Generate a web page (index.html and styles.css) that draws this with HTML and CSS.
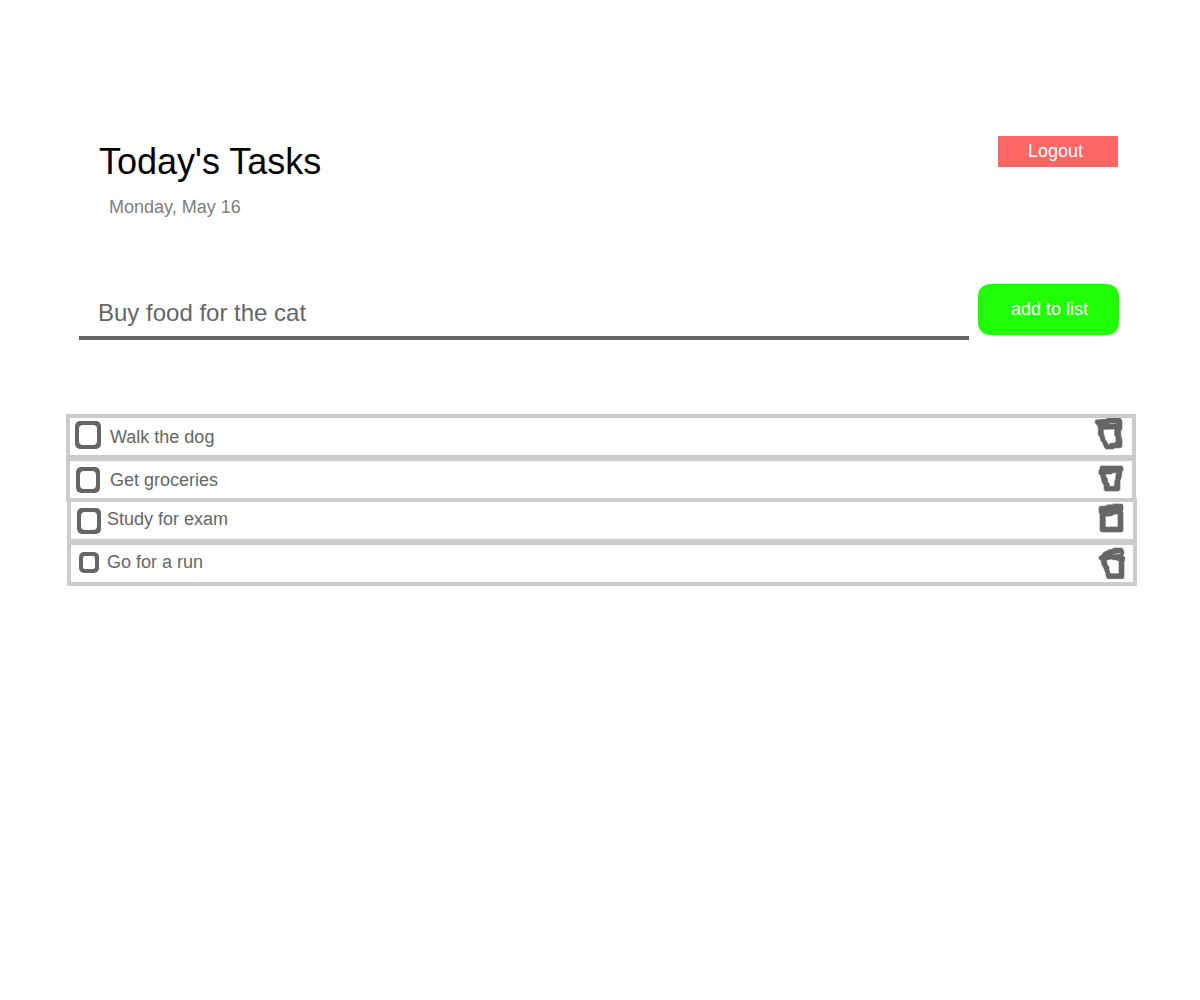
FILE: index.html
```html
<!DOCTYPE html>
<html lang="en">
<head>
<meta charset="utf-8">
<meta name="viewport" content="width=device-width, initial-scale=1">
<title>Today's Tasks</title>
<link rel="stylesheet" href="styles.css">
</head>
<body>
<main class="page">
  <header class="header">
    <div>
      <h1 class="title">Today's Tasks</h1>
      <p class="date">Monday, May 16</p>
    </div>
    <button class="logout" type="button">Logout</button>
  </header>

  <form class="add-form">
    <input class="new-task" type="text" aria-label="New task" value="Buy food for the cat">
    <button class="add" type="button">add to list</button>
  </form>

  <ul class="tasks">
    <li class="task">
      <span class="slot"><input class="check large" type="checkbox" id="task-1"></span>
      <label class="name" for="task-1">Walk the dog</label>
      <button class="delete" type="button" aria-label="Delete Walk the dog">
        <svg viewBox="36 39 108 111"><path fill-rule="evenodd" d="M47 45L80 42L82 39H120L124 43L126 50V72L122 78L123 95L126 104V125L122 128L102 129L100 132H78L73 127L68 113L62 106L60 96L55 89V68L52 61L49 58L45 51ZM87 54V57H108V54ZM70 73V86L74 95L75 103L81 112L84 118L89 119L91 115L105 114L108 108V98L104 90V72Z"/></svg>
      </button>
    </li>
    <li class="task">
      <span class="slot"><input class="check medium" type="checkbox" id="task-2"></span>
      <label class="name" for="task-2">Get groceries</label>
      <button class="delete" type="button" aria-label="Delete Get groceries">
        <svg viewBox="36 168 108 111"><path fill-rule="evenodd" d="M63 183H126L129 187V196L126 200L123 220L120 226V253L116 258H76L72 253V241L66 230L62 211L57 208V196L60 192V187ZM76 207L78 215L82 220L83 230L88 237V244H104V230L107 221L109 202L98 204L94 207Z"/></svg>
      </button>
    </li>
  </ul>

  <ul class="tasks later">
    <li class="task">
      <span class="slot"><input class="check medium" type="checkbox" id="task-3"></span>
      <label class="name" for="task-3">Study for exam</label>
      <button class="delete" type="button" aria-label="Delete Study for exam">
        <svg viewBox="39 21 108 111"><path fill-rule="evenodd" d="M60 34L78 33L81 30L98 29L100 27H126L129 31V44L127 48L129 54V107L126 111H66L60 107V58L57 51V37ZM76 64V96H114V57L101 58L96 62Z"/></svg>
      </button>
    </li>
    <li class="task">
      <span class="slot"><input class="check small" type="checkbox" id="task-4"></span>
      <label class="name" for="task-4">Go for a run</label>
      <button class="delete" type="button" aria-label="Delete Go for a run">
        <svg viewBox="39 150 108 111"><path fill-rule="evenodd" d="M57 185L66 180L70 173L85 165L99 162L102 159H125L130 164L132 172L130 179L128 182L134 186V197L132 200V247L129 251H84L79 246L77 233L71 218L66 210L63 196L57 192ZM96 180L121 178L123 175L117 174L103 176ZM79 195L81 207L87 217V225L91 236H117V198L110 195L99 194L94 192Z"/></svg>
      </button>
    </li>
  </ul>
</main>
</body>
</html>
```
FILE: styles.css
```css
* {
  box-sizing: border-box;
}

body {
  margin: 0;
  background: #fff;
  color: #666;
  font-family: "Liberation Sans", Arial, sans-serif;
  font-size: 18px;
  line-height: 24px;
}

button,
input {
  margin: 0;
  border: 0;
  padding: 0;
  font: inherit;
}

.page {
  padding: 136px 64px 64px 66px;
}

.header {
  display: flex;
  justify-content: space-between;
  align-items: flex-start;
  padding: 0 18px 0 33px;
}

.title {
  margin: 0;
  color: #000;
  font-size: 36px;
  font-weight: 400;
  line-height: 52px;
}

.date {
  margin: 7px 0 0 10px;
  color: #808080;
}

.logout {
  width: 120px;
  height: 31px;
  padding: 0 5px 2px 0;
  background: #f66;
  color: #fff;
}

.add-form {
  display: flex;
  align-items: flex-start;
  gap: 9px;
  margin-top: 65px;
  padding: 0 17px 0 13px;
}

.new-task {
  flex: 1;
  min-width: 0;
  height: 56px;
  padding: 6px 19px 0;
  border-bottom: 4px solid #666;
  border-radius: 0;
  background: transparent;
  color: #666;
  font-size: 24px;
  outline: 0;
}

.add {
  width: 141px;
  height: 51px;
  padding: 0 0 2px 2px;
  border-radius: 12px;
  background: #21ff06;
  color: #fff;
}

.tasks {
  margin: 74px 0 0;
  padding: 0;
  list-style: none;
}

/* The second group overlaps the first one's bottom border. */
.later {
  margin: -4px -1px 0 1px;
}

.task {
  display: flex;
  align-items: center;
  height: 45px;
  padding-right: 4px;
  border: 4px solid #ccc;
}

.task + .task {
  margin-top: -2px;
}

.slot {
  display: flex;
  justify-content: center;
  width: 36px;
}

.check {
  display: grid;
  appearance: none;
  padding: 4px;
  border-radius: 5px;
  background: #666;
}

.check::before {
  content: "";
  border-radius: 4px;
  background: #fff;
}

.check:checked::before {
  background: #ccc;
}

.large {
  width: 26px;
  height: 28px;
  margin-bottom: 4px;
}

.medium {
  width: 24px;
  height: 26px;
}

.small {
  width: 20px;
  height: 21px;
  margin-bottom: 2px;
}

.small::before {
  border-radius: 2px;
}

.name {
  flex: 1;
  padding-left: 4px;
}

.later .name {
  padding: 0 0 4px;
}

.delete {
  width: 36px;
  height: 37px;
  background: none;
}

.delete svg {
  display: block;
  width: 36px;
  height: 37px;
  fill: #666;
  stroke: #666;
  stroke-width: 2px;
}
```
